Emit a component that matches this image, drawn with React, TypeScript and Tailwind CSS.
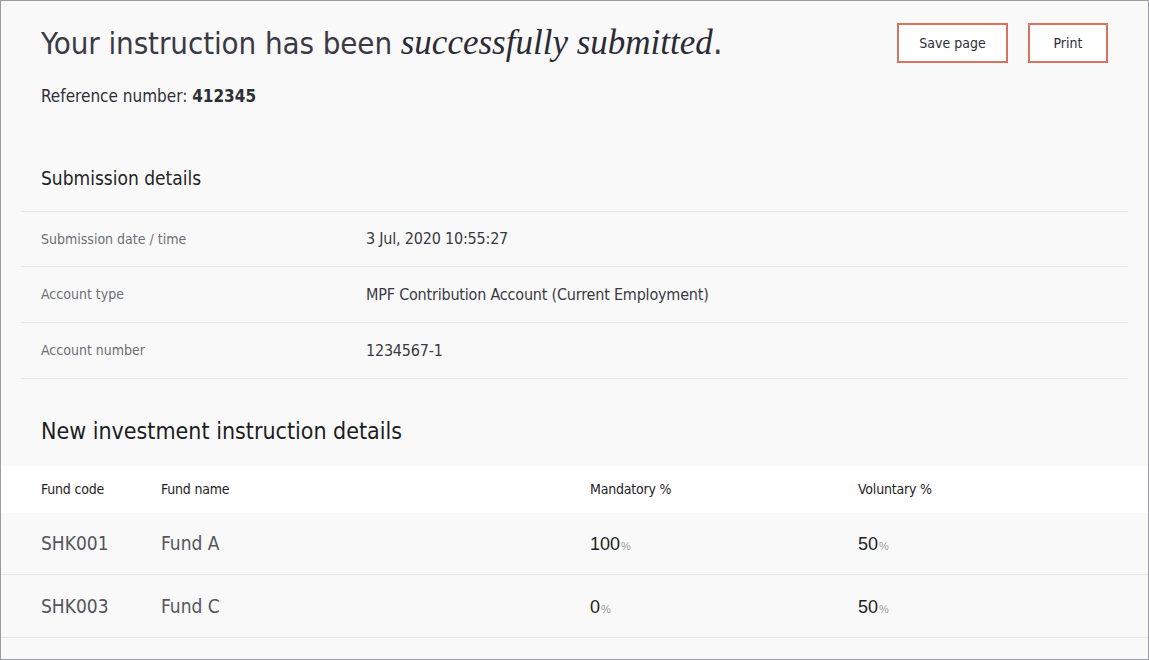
const narrow = "font-['Liberation_Sans_Narrow','DejaVu_Sans_Condensed','Liberation_Sans',sans-serif]";

const details = [
  { label: "Submission date / time", value: "3 Jul, 2020 10:55:27" },
  { label: "Account type", value: "MPF Contribution Account (Current Employment)" },
  { label: "Account number", value: "1234567-1" },
];

const funds = [
  { code: "SHK001", name: "Fund A", mandatory: 100, voluntary: 50 },
  { code: "SHK003", name: "Fund C", mandatory: 0, voluntary: 50 },
];

function Pct({ n }: { n: number }) {
  return (
    <span className="font-['Liberation_Sans',sans-serif] text-[18px] text-[#1e1e24]">
      {n}
      <span className="text-[11px] text-[#999] ml-[1px]">%</span>
    </span>
  );
}

export default function App() {
  return (
    <div className={`w-[1149px] h-[660px] overflow-hidden bg-[#f9f9f9] border border-[#9b9ba6] ${narrow} text-[#2a2a33]`}>
      <div className="flex items-start justify-between pl-[40px] pr-[40px] pt-[21px]">
        <div>
          <h1 className="text-[31px] leading-[40px] font-light tracking-[-0.1px] text-[#3a3a46]">
            Your instruction has been{" "}
            <span className="font-['Liberation_Serif',serif] italic text-[35px] tracking-normal text-[#2b2b36]">successfully submitted</span>
            <span className="text-[35px]">.</span>
          </h1>
          <p className="mt-[21px] text-[17px] leading-[24px] text-[#2e2e36]">
            Reference number: <span className="font-bold">412345</span>
          </p>
        </div>
        <div className="flex gap-[20px] pt-[1px]">
          <button className="w-[111px] h-[40px] border-2 border-[#d9735f] bg-white text-[14px] text-[#2e2e38]">
            Save page
          </button>
          <button className="w-[80px] h-[40px] border-2 border-[#d9735f] bg-white text-[14px] text-[#2e2e38]">
            Print
          </button>
        </div>
      </div>

      <div className="px-[20px] mt-[58px]">
        <h2 className="pl-[20px] text-[19px] leading-[24px] font-medium text-[#1f1f27] pb-[21px]">
          Submission details
        </h2>
        <div className="border-t border-[#e6e6e6]">
          {details.map((d, i) => (
            <div
              key={d.label}
              className={`flex items-center border-b border-[#e6e6e6] pl-[20px] ${i === 0 ? "h-[55px]" : "h-[56px]"}`}
            >
              <div className="w-[325px] text-[14px] text-[#6e6e76]">{d.label}</div>
              <div className="text-[16px] tracking-[-0.2px] text-[#3a3a42]">{d.value}</div>
            </div>
          ))}
        </div>
      </div>

      <h2 className="pl-[40px] mt-[37px] text-[23px] leading-[30px] font-medium text-[#1c1c22]">
        New investment instruction details
      </h2>

      <div className="mt-[20px]">
        <div className="flex items-center h-[47px] bg-white pl-[40px] text-[14px] tracking-[-0.2px] text-[#1e1e26]">
          <div className="w-[120px]">Fund code</div>
          <div className="w-[429px]">Fund name</div>
          <div className="w-[268px]">Mandatory %</div>
          <div>Voluntary %</div>
        </div>
        {funds.map((f, i) => (
          <div
            key={f.code}
            className={`flex items-center border-b border-[#e6e6e6] pl-[40px] text-[19px] font-light text-[#55555d] ${i === 0 ? "h-[62px]" : "h-[63px]"}`}
          >
            <div className="w-[120px]">{f.code}</div>
            <div className="w-[429px]">{f.name}</div>
            <div className="w-[268px]"><Pct n={f.mandatory} /></div>
            <div><Pct n={f.voluntary} /></div>
          </div>
        ))}
      </div>
    </div>
  );
}
